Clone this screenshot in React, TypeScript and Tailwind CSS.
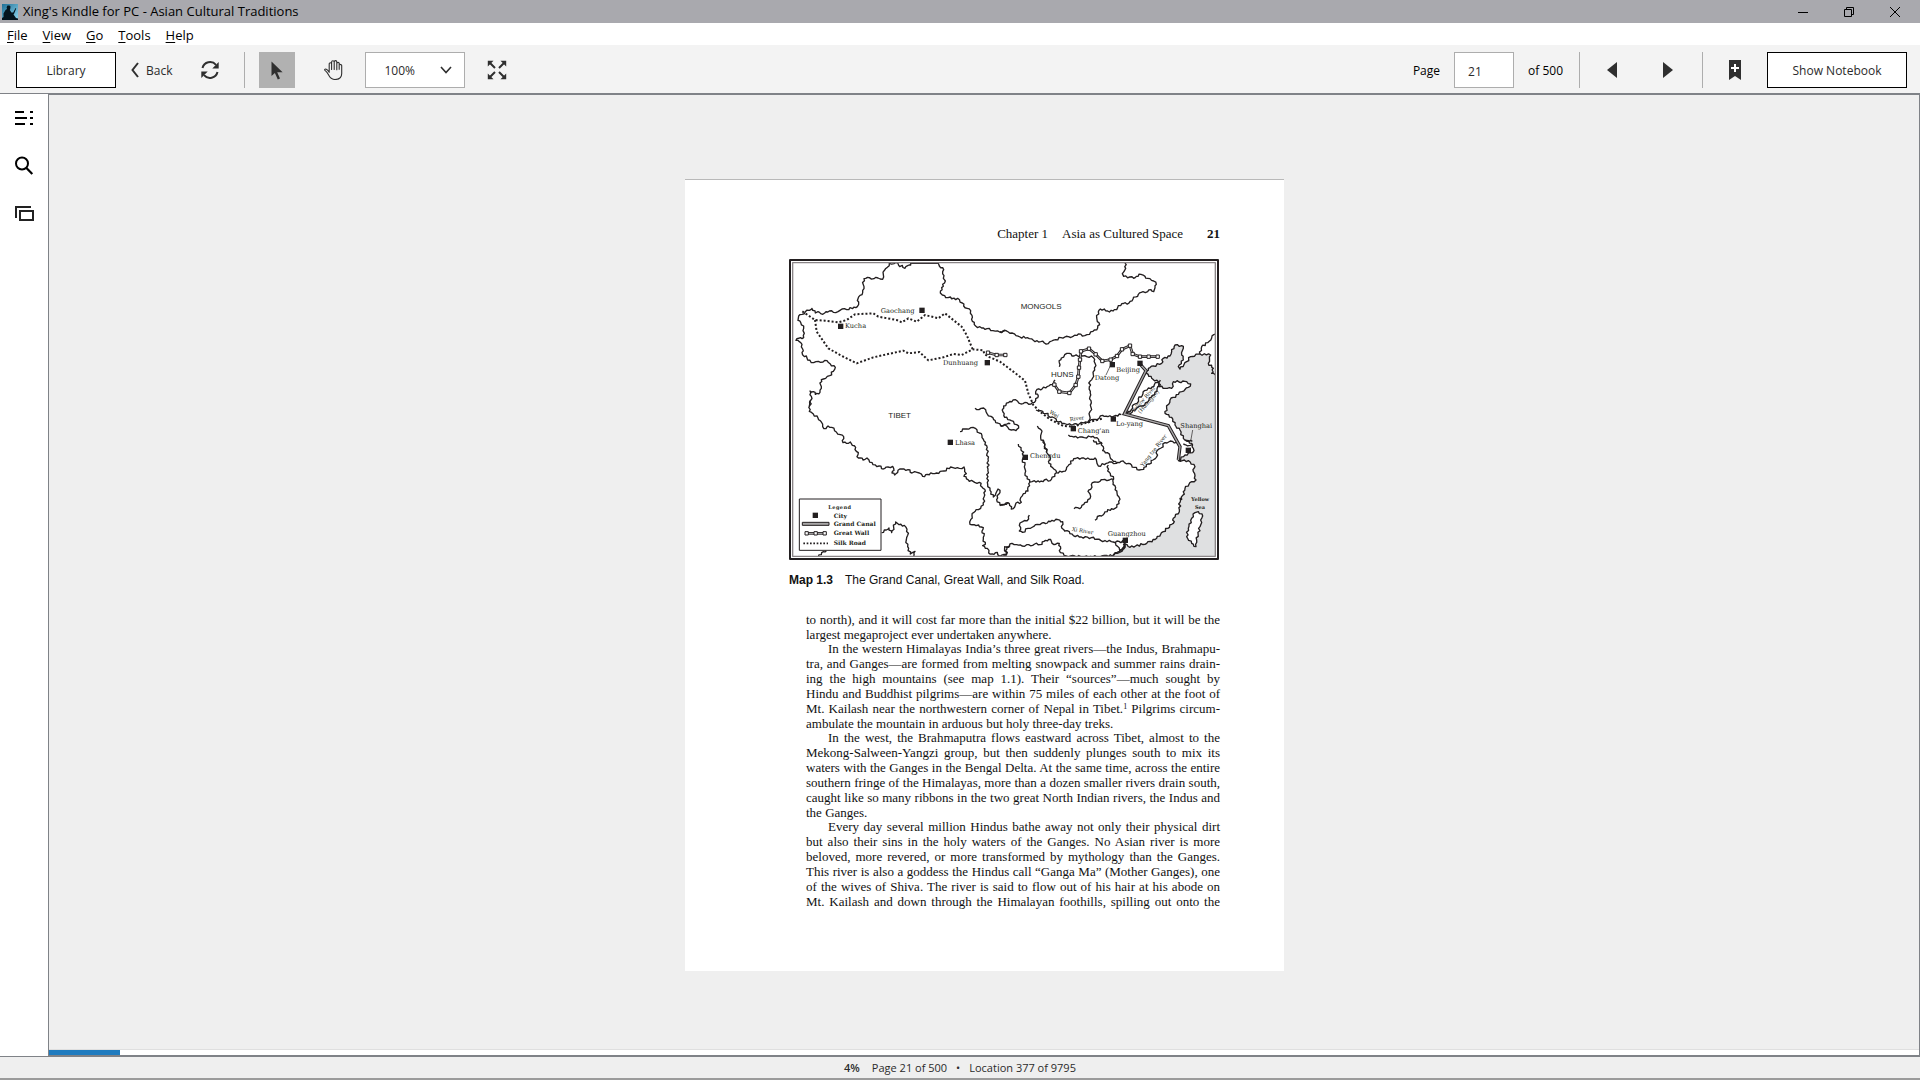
import type { ReactNode } from "react";

const menus = ["File", "View", "Go", "Tools", "Help"];

// Each inner array is one paragraph, each string one set line.
const paragraphs: string[][] = [
  [
    "to north), and it will cost far more than the initial $22 billion, but it will be the",
    "largest megaproject ever undertaken anywhere.",
  ],
  [
    "In the western Himalayas India’s three great rivers—the Indus, Brahmapu-",
    "tra, and Ganges—are formed from melting snowpack and summer rains drain-",
    "ing the high mountains (see map 1.1). Their “sources”—much sought by",
    "Hindu and Buddhist pilgrims—are within 75 miles of each other at the foot of",
    "Mt. Kailash near the northwestern corner of Nepal in Tibet.^1 Pilgrims circum-",
    "ambulate the mountain in arduous but holy three-day treks.",
  ],
  [
    "In the west, the Brahmaputra flows eastward across Tibet, almost to the",
    "Mekong-Salween-Yangzi group, but then suddenly plunges south to mix its",
    "waters with the Ganges in the Bengal Delta. At the same time, across the entire",
    "southern fringe of the Himalayas, more than a dozen smaller rivers drain south,",
    "caught like so many ribbons in the two great North Indian rivers, the Indus and",
    "the Ganges.",
  ],
  [
    "Every day several million Hindus bathe away not only their physical dirt",
    "but also their sins in the holy waters of the Ganges. No Asian river is more",
    "beloved, more revered, or more transformed by mythology than the Ganges.",
    "This river is also a goddess the Hindus call “Ganga Ma” (Mother Ganges), one",
    "of the wives of Shiva. The river is said to flow out of his hair at his abode on",
    "Mt. Kailash and down through the Himalayan foothills, spilling out onto the",
  ],
];

function KindleLogo() {
  return (
    <svg viewBox="0 0 16 16" className="h-4 w-4">
      <defs>
        <linearGradient id="sky" x1="0" y1="0" x2="1" y2="1">
          <stop offset="0" stopColor="#1d6f96" />
          <stop offset="1" stopColor="#8fd6ee" />
        </linearGradient>
      </defs>
      <rect width="16" height="16" fill="url(#sky)" />
      <path d="M0 16v-2l1.5-1V9.5L3.5 6 5 5 4.6 3.2 5.5 1.6l2-.2 1 1.2-.2 2L7.8 6l1.6 2.4 1.8.2L13.6 4l.6.4-2 5.2-.7 1L14 14l2 .6V16z" fill="#04141d" />
    </svg>
  );
}

function RefreshIcon() {
  return (
    <svg viewBox="0 0 20 20" className="h-5 w-5" fill="none" stroke="#2f2f2f" strokeWidth="2">
      <path d="M2.5 8A7.8 7.8 0 0 1 16 4.8" />
      <path d="M17.5 12A7.8 7.8 0 0 1 4 15.2" />
      <path d="M18.7 2v6.4h-6.4zM1.3 18v-6.4h6.4z" fill="#2f2f2f" stroke="none" />
    </svg>
  );
}

function CursorIcon() {
  return (
    <svg viewBox="0 0 12 19" className="h-[19px] w-3">
      <path d="M.5.5v14.6l3.4-3.2 2.9 6.6 2.2-1-2.8-6.3h5.4z" fill="#2f2f2f" />
    </svg>
  );
}

function HandIcon() {
  return (
    <svg viewBox="0 0 20 20" className="h-5 w-5" fill="none" stroke="#2f2f2f" strokeWidth="1.1" strokeLinejoin="round">
      <path d="M6.2 12.3V4a1.2 1.2 0 0 1 2.4 0v5.5V2.1a1.3 1.3 0 0 1 2.6 0v7.4V1.9a1.3 1.3 0 0 1 2.6 0v7.8V3.6a1.2 1.2 0 0 1 2.4 0l1 1.1a1 1 0 0 1 1.5.8v8c0 3.7-2.7 6-6.7 6-3.4 0-4.8-1.7-6.1-4-1-1.8-1.9-3.6-3.4-4.6-1.7-1.1-.4-2.3.9-1.6 1.3.6 2 1.6 2.8 3z" />
      <path d="M16.2 4v5.8" />
    </svg>
  );
}

function ExpandIcon() {
  return (
    <svg viewBox="0 0 20 20" className="h-5 w-5" fill="#2f2f2f" stroke="#2f2f2f" strokeWidth="2">
      <path d="M3 3l5 5M17 3l-5 5M3 17l5-5M17 17l-5-5" />
      <path d="M.8.8h5.7L.8 6.5zM19.2.8v5.7L13.5.8zM.8 19.2v-5.7l5.7 5.7zM19.2 19.2h-5.7l5.7-5.7z" stroke="none" />
    </svg>
  );
}

function BookmarkIcon() {
  return (
    <svg viewBox="0 0 12 20" className="h-5 w-3">
      <path d="M0 0h12v20l-6-4-6 4z" fill="#2f2f2f" />
      <path d="M6 4v8M2 8h8" stroke="#fff" strokeWidth="2" />
    </svg>
  );
}

function Divider() {
  return <span className="h-9 w-px bg-[#adadad]" />;
}

function TitleBar() {
  return (
    <header className="flex h-[23px] shrink-0 items-center bg-[#a9a9ae] pl-[2px] text-black">
      <KindleLogo />
      <h1 className="ml-[5px] text-[13px]">Xing's Kindle for PC - Asian Cultural Traditions</h1>
      <div className="mr-[2px] ml-auto flex">
        <button aria-label="Minimize" className="flex h-5 w-[46px] items-center justify-center">
          <svg viewBox="0 0 10 10" className="h-[10px] w-[10px]" stroke="#000">
            <path d="M0 5.5h10" />
          </svg>
        </button>
        <button aria-label="Restore" className="flex h-5 w-[46px] items-center justify-center">
          <svg viewBox="0 0 10 10" className="h-[10px] w-[10px]" stroke="#000" fill="none">
            <path d="M.5 2.5h7v7h-7zM2.5 2V.5h7v7H8" />
          </svg>
        </button>
        <button aria-label="Close" className="flex h-5 w-[46px] items-center justify-center">
          <svg viewBox="0 0 10 10" className="h-[10px] w-[10px]" stroke="#000">
            <path d="M0 0l10 10M10 0L0 10" />
          </svg>
        </button>
      </div>
    </header>
  );
}

function MenuBar() {
  return (
    <nav className="flex h-[22px] shrink-0 items-center gap-[15px] bg-white pt-[3px] pl-[7px] text-[13px] text-black">
      {menus.map((m) => (
        <button key={m}>
          <span className="underline underline-offset-2">{m[0]}</span>
          {m.slice(1)}
        </button>
      ))}
    </nav>
  );
}

function Toolbar() {
  return (
    <div className="flex h-12 shrink-0 items-center bg-[#f3f3f3] pt-[2px] pr-[13px] pl-4 text-[12px] text-[#2b2b2b]">
      <button className="h-9 w-[100px] border border-black bg-white pt-[2px]">Library</button>
      <button className="ml-[15px] flex items-center gap-[7px] pt-[2px]">
        <svg viewBox="0 0 8 16" className="mb-[2px] h-4 w-2" fill="none" stroke="#2f2f2f" strokeWidth="2">
          <path d="M7 1L1.5 8 7 15" />
        </svg>
        Back
      </button>
      <button aria-label="Sync" className="ml-7">
        <RefreshIcon />
      </button>
      <span className="ml-6 flex">
        <Divider />
      </span>
      <button aria-label="Select" className="ml-[14px] flex h-9 w-9 items-center justify-center bg-[#b1b1b1]">
        <CursorIcon />
      </button>
      <button aria-label="Pan" className="ml-5 flex h-9 w-9 items-center justify-center">
        <HandIcon />
      </button>
      <div className="relative ml-[14px]">
        <select aria-label="Zoom" defaultValue="100%" className="h-9 w-[100px] appearance-none border border-[#adadad] bg-white pt-[2px] pl-[18px]">
          <option>100%</option>
        </select>
        <svg viewBox="0 0 12 8" className="pointer-events-none absolute top-[14px] right-[13px] h-2 w-3" fill="none" stroke="#2f2f2f" strokeWidth="1.6">
          <path d="M1 1l5 5.5L11 1" />
        </svg>
      </div>
      <button aria-label="Full screen" className="ml-[22px]">
        <ExpandIcon />
      </button>

      <div className="ml-auto flex items-center text-black">
        <label htmlFor="page" className="pt-[2px]">Page</label>
        <input id="page" defaultValue="21" className="ml-[14px] h-9 w-[60px] border border-[#adadad] bg-white pt-[2px] pl-[13px] text-[#2b2b2b]" />
        <span className="mr-4 ml-[14px] pt-[2px]">of 500</span>
        <Divider />
        <button aria-label="Previous page" className="ml-[27px]">
          <svg viewBox="0 0 10 16" className="h-4 w-[10px]">
            <path d="M10 0v16L0 8z" fill="#2f2f2f" />
          </svg>
        </button>
        <button aria-label="Next page" className="mr-[29px] ml-[46px]">
          <svg viewBox="0 0 10 16" className="h-4 w-[10px]">
            <path d="M0 0v16l10-8z" fill="#2f2f2f" />
          </svg>
        </button>
        <Divider />
        <button aria-label="Bookmark" className="mr-[26px] ml-[26px]">
          <BookmarkIcon />
        </button>
        <button className="h-9 w-[140px] border border-black bg-white pt-[2px] text-[#2b2b2b]">Show Notebook</button>
      </div>
    </div>
  );
}

function Sidebar() {
  return (
    <aside className="flex w-12 shrink-0 flex-col items-center gap-7 bg-white pt-[14px]">
      <button aria-label="Table of contents">
        <svg viewBox="0 0 20 20" className="h-5 w-5" fill="#000">
          <path d="M1 3h9v2H1zM1 9h12v2H1zM1 15h10v2H1zM16 3h3v2h-3zM16 9h3v2h-3zM16 15h3v2h-3z" />
        </svg>
      </button>
      <button aria-label="Search">
        <svg viewBox="0 0 20 20" className="h-5 w-5" fill="none" stroke="#000" strokeWidth="2">
          <circle cx="8" cy="7.5" r="6" />
          <path d="M12.2 11.7L18.3 18" strokeWidth="2.2" />
        </svg>
      </button>
      <button aria-label="Flashcards">
        <svg viewBox="0 0 20 20" className="h-5 w-5" fill="none" stroke="#222" strokeWidth="2">
          <path d="M6 7h13v9H6zM2 14V3h15" />
        </svg>
      </button>
    </aside>
  );
}

// Walks a path made of M, l, h, v and z and breaks every leg into small
// uneven steps, so that coasts and rivers look surveyed rather than ruled.
const wobble = [2, -3, 1, 3, -2, -1, 3, -3, 2, 0, -2, 3, -1];

function jag(d: string) {
  const tokens = d.match(/[Mlhvz]|-?\d+/g) ?? [];
  const out: string[] = [];
  let cmd = "M";
  let x = 0;
  let y = 0;
  let n = 0;
  let started = false;
  for (let i = 0; i < tokens.length; ) {
    if (/[Mlhvz]/.test(tokens[i])) {
      cmd = tokens[i++];
      if (cmd === "z") out.push("z");
      if (cmd === "M") started = false;
      continue;
    }
    let nx = x;
    let ny = y;
    if (cmd === "M") {
      nx = +tokens[i++];
      ny = +tokens[i++];
    } else if (cmd === "l") {
      nx += +tokens[i++];
      ny += +tokens[i++];
    } else if (cmd === "h") nx += +tokens[i++];
    else ny += +tokens[i++];

    if (!started) {
      out.push(`M${nx} ${ny}`);
      started = true;
    } else {
      const len = Math.hypot(nx - x, ny - y);
      const steps = len > 60 ? 1 : Math.max(1, Math.round(len / 6));
      for (let s = 1; s < steps; s++) {
        const off = wobble[n++ % wobble.length];
        const px = x + ((nx - x) * s) / steps - ((ny - y) / len) * off;
        const py = y + ((ny - y) * s) / steps + ((nx - x) / len) * off;
        out.push(`L${px.toFixed(1)} ${py.toFixed(1)}`);
      }
      out.push(`L${nx} ${ny}`);
    }
    x = nx;
    y = ny;
  }
  return out.join("");
}

function Rough({ d, fill }: { d: string; fill?: string }) {
  return <path d={jag(d)} fill={fill} />;
}

function City({ x, y }: { x: number; y: number }) {
  return <rect x={x - 8} y={y - 8} width="16" height="16" fill="#231f20" stroke="none" />;
}

function Label({ x, y, rotate, children }: { x: number; y: number; rotate?: number; children: ReactNode }) {
  return (
    <text x={x} y={y} transform={rotate ? `rotate(${rotate} ${x} ${y})` : undefined} className="font-['DejaVu_Serif'] text-[20px]" fill="#231f20" stroke="none">
      {children}
    </text>
  );
}

function Region({ x, y, children }: { x: number; y: number; children: ReactNode }) {
  return (
    <text x={x} y={y} className="font-['Liberation_Sans'] text-[24px]" fill="#231f20" stroke="none">
      {children}
    </text>
  );
}

function Wall({ points }: { points: number[][] }) {
  const line = points.map((p) => p.join(",")).join(" ");
  return (
    <g>
      <polyline points={line} strokeWidth="8" stroke="#231f20" />
      <polyline points={line} strokeWidth="2" stroke="#fff" />
      {points.map(([x, y]) => (
        <rect key={`${x}-${y}`} x={x - 5} y={y - 5} width="10" height="10" fill="#fff" stroke="#231f20" strokeWidth="3" />
      ))}
    </g>
  );
}

function SilkRoadMap() {
  return (
    <svg viewBox="0 0 1290 903" className="block w-full" fill="none" stroke="#231f20" strokeWidth="3" strokeLinejoin="round">
      <defs>
        <clipPath id="sheet">
          <path d="M11 11h1268v881H11z" />
        </clipPath>
      </defs>
      <rect x="3" y="3" width="1284" height="897" fill="#fff" strokeWidth="6" />

      <g clipPath="url(#sheet)" strokeWidth="4">
        {/* sea */}
        <Rough
          d="M1290 345 1268 343 1273 328 1258 313 1265 288 1233 285 1205 293 1193 308 1173 330 1168 323 1183 303 1178 288 1183 268 1178 260 1158 258 1148 278 1143 291 1123 298 1118 313 1093 321 1078 328 1073 343 1088 358 1108 368 1113 383 1128 388 1148 388 1153 368 1193 368 1205 375 1198 385 1178 398 1143 423 1133 448 1128 463 1148 475 1158 498 1173 513 1183 538 1208 553 1213 568 1211 581 1188 588 1168 605 1198 605 1218 623 1213 638 1221 663 1208 668 1188 688 1178 721 1173 718 1171 758 1153 778 1153 793 1123 818 1103 838 1073 853 1023 865 1008 855 1001 873 973 888 965 903 1290 903z"
          fill="#dfe0e1"
        />
        <Rough d="M1228 758l13 13-8 32-10 40-2 20-13-10-15-20 5-25 10-30 10-17z" fill="#fff" />

        {/* north-west */}
        <g transform="translate(-27 -27)">
          <Rough d="M328 30v10l-6 12-8 8-4 14-2 14-14-4-12 2-14-3-16 3-2 18 2 12-4 12-8 8-6 10 2 10-4 14-14 6-8-3-10 6-14-2-12 8-14 2-12-4-14 6-12 2-8-6-8 4-10-14-8 6-12 4-10 8-10 5-2 13 8 6 9 11-2 14 4 8-2 13-10 0-13 8 10 4 8 8 2 14-2 10 7 13 6-2 4 12 18 8 14-4 14 2 12-4 10 10 15 10-6 12-11 13-12 8-13 4-2 16 2 10-4 12-14 6-6-8-10-2 4 16-2 12-4 17" />
          <Rough d="M328 40l14 1 12-1 5 10 8-4 8 9 8-8 9-2v-5h83l3 8 10 5v12l4 12-2 8 6 8-8 10 2 6-9 20 6 6 10 8 14-2 16 8 6-4 14 14 4 9 21 14 4 14 1 18 10 14 18 6 16 2 18 6 20 4 15-3" />
        </g>

        {/* north-east */}
        <g transform="translate(633 -27)">
          <Rough d="M0 245l20-2 16 6 12 8 12 4 22 2 18 8 22 4 23 6 10-8 12-4 16-6 22-3 14-1 16-7 12 6 14-4 18-10 14-10 6-10-7-9-2-12 5-18 6-8 22 6 16 0 14-10 12-12 22-2 12-12 16-14 14-8 14 0 10-6 8 6 4-12 4-10-8-10-18-8-8-6-12-6-14 6-8 6-12-4-18-2-4-8 6-8 4-8-2-16" />
          <Rough d="M653 240l-18 24-12 14-18 12-5 22" />
          <Rough d="M178 350v-12l6-14 10-10 14-4 14 8 20-1 18 3 14-2 10 10 1 12-1 20-4 14-2 10-8 10-2 16 3 14-1 16 3 12 0 20-4 26-2 22" />
        </g>

        {/* Tibet and the south-western border */}
        <g transform="translate(-27 423)">
          <Rough d="M92 0l-4 34 12 8 14 12 10 12 4 14 10 6 6-8 11 4 14 14 12 8 10 6-2 18 10 2 12-4 6 10 10 6 2 12 6 4-4 12 10 4 8 6 12-6 6 6 12 14 18 4 13 9 14-6 14-2 4 12-6 8 8 6 10-14 12-4 18 2 12 10 8-4 14 4 10 10 14-6 16-2 12-2 22-6 20-12 14 4 12 0 14-4 2 14 5 6-7 8 12 10 20 8 14 0 8 14 10 12-4 18-2 24-8 10-14 4-6 8-6 10-4 12-2 14 18 4 8-2 8 6 6 2-4 10 6 14-2 10 6 16-8 4 14 8 4 14 16 4 10-6 8 12 12-6 8 0 0-22 10-4" />
          <Rough d="M305 398l14-8 8-6 8 14 6-16 6-16 10 8 16 2 8 12 2 18-4 14 4 20 8 22 6-4 8-4-4 16M115 470l10-12 14-6" />
          <Rough d="M585 25l12 4 6-4 14 4 4 12 12 8 8 10 12 10 10 10 12-6 16-2" />
          <Rough d="M540 95l14-8 18-4 14 2 12 14 8 8 6 16 8 14 4 40 0 30-2 40 8 24 10 20 8-12 6-12 6 4-4 12-6 16 10 16 12-2 12-6" />
        </g>

        {/* central rivers */}
        <g transform="translate(633 213)">
          <Rough d="M0 285l20 3 14 12 14 2 8-8-6-10-16-12-20-10-5-16 2-18 14-10 14-8 14 4 10 8 18-4 12 4 14-10 8-14-8-6 4-14 16-2 14-6 16-6 8-14" />
          <Rough d="M108 240l14 2 8 8 14 0 6 12 14 2 12 12 16 4 10 4 20-2 16 0 18-6 14-4 16-4 12-4 10-8 16 4 18-2 22-4" />
          <Rough d="M375 252l16-8 6-16 14-8 4-14 12-10 6-14 12-8 8 2 10-12 18-14M373 252l24-6 16-14 14-4 20-18 10-14 14-12 2-14 8-6-6-4" />
          <Rough d="M112 288l10 10 2 12-2 14 10 12 2 12 6 18M205 315l16 6 18 0 14 2 26-4 12 4 6 12 10 6" />
          <Rough d="M555 330l12 4 10 0M550 342l20 4 8-2" />
        </g>

        {/* southern rivers and coast */}
        <g transform="translate(633 543)">
          <Rough d="M280 0l10 12 14-4 6 12-2 12 14 6 8 12 10 14 10 4" />
          <Rough d="M130 0l3 20 8 8 2 14 8 12-4 16 10 12 13 15" />
          <Rough d="M55 12l8 18 8 6-4 24 8 14 0 26 14 26 14-4 16 4 14-6 18 2 18-24 16-2 14-8 8-14 14-18 24-2 24 4 16-4 6 16 4 8 24-8 16-4 14 4 14-6 22 6 18 12 14 8 14-2 8-14 10-2 10-12 10-8 2-20 12-8 12-16 22-4 20 6" />
          <Rough d="M90 127l-6 14 0 12-14 8-8 12 2 14-16 2-4 12-10 6-6-16-10-2-18 8M325 75l-2 18 8 8 10 16-2 16 8 10 4 16 6 12 0 20-12 14-14 6-8-2-14 16-10 2-14 14M340 118l-12 2-14-2-14 6-16 2-10 8-2 14-8 6 6 8 0 14-8 10-8 2-10 14-22 4" />
          <Rough d="M88 225l-2 12-18 8-8 4 2 14-4 10 10 4 16-12 14-4 14-8 14-4 16 0 14-8 18-2 14 6-4 14 10 14 14 2 12 12 24 4 30 2 28 8 32 4 40 0" />
          <Rough d="M0 350h18l-4-30 14-2 8-8 14 4 16 4 14-4 18 2 6-4 16 2 12-10 14-6 8 6 8 10 16-4 4 16-4 6 14 14 20 2 30 2h60l18-4 16 2 10-10 16-2 8-14 4-6-4-16M345 305l8 14 6 12 12-4 4-18" />
        </g>
      </g>
      <rect x="11" y="11" width="1268" height="881" stroke="#8a8587" strokeWidth="4" />

      {/* leader lines */}
      <path d="M965 318l-14 30M1211 513l-6 34" strokeWidth="2" />

      {/* Silk Road */}
      <g strokeWidth="6" strokeDasharray="6 6">
        <path d="M40 157l38 26 30 2 40 5 25-7 25-17 55-3 15 10 55 10 15 7 20-12 25 10 25-20 40 10 20-15 50 40 15 25 18 43" />
        <path d="M78 183l5 35 35 50 35 20 50 25 50-18 90-20 15 8 33-4 27 25 45-9 30-10 25 3 33-17 32 3 3 11 12 8 35 15L673 338 708 365 718 403 733 438 753 458 783 481 823 501 853 503 893 491 943 478" />
      </g>

      {/* Grand Canal */}
      <g strokeLinejoin="miter">
        <path d="M1053 315l18 20-65 130 132 35 35 63-5 40" strokeWidth="10" />
        <path d="M1053 315l18 20-65 130 132 35 35 63-5 40" strokeWidth="4" stroke="#a8a6a7" />
      </g>

      <Wall points={[[597, 281], [623, 288], [649, 288]]} />
      <Wall
        points={[
          [796, 377], [811, 398], [841, 402], [860, 378], [868, 353], [870, 326], [873, 302], [876, 277], [900, 269], [920, 286],
          [940, 306], [965, 302], [984, 291], [999, 271], [1023, 260], [1031, 285], [1053, 293], [1079, 293], [1106, 293],
        ]}
      />

      <City x={399} y={154} />
      <City x={155} y={202} />
      <City x={595} y={311} />
      <City x={484} y={550} />
      <City x={970} y={317} />
      <City x={1053} y={313} />
      <City x={973} y={480} />
      <City x={853} y={509} />
      <City x={709} y={595} />
      <City x={1198} y={574} />
      <City x={1009} y={844} />

      <Label x={275} y={161}>Gaochang</Label>
      <Label x={168} y={207}>Kucha</Label>
      <Label x={462} y={317}>Dunhuang</Label>
      <Label x={498} y={558}>Lhasa</Label>
      <Label x={917} y={363}>Datong</Label>
      <Label x={982} y={338}>Beijing</Label>
      <Label x={981} y={501}>Lo-yang</Label>
      <Label x={866} y={521}>Chang'an</Label>
      <Label x={723} y={597}>Chengdu</Label>
      <Label x={1174} y={506}>Shanghai</Label>
      <Label x={956} y={831}>Guangzhou</Label>
      <g className="[&_text]:text-[16px]">
        <Label x={780} y={462} rotate={32}>Wei</Label>
        <Label x={843} y={487} rotate={-8}>River</Label>
        <Label x={1034} y={462} rotate={-48}>Yellow River</Label>
        <Label x={1054} y={464} rotate={-48}>(Huanghe)</Label>
        <Label x={1062} y={624} rotate={-52}>Yang tze River</Label>
        <Label x={848} y={815} rotate={10}>Xi River</Label>
      </g>
      <g className="font-bold [&_text]:text-[15px]">
        <Label x={1207} y={726}>Yellow</Label>
        <Label x={1218} y={749}>Sea</Label>
      </g>
      <Region x={695} y={150}>MONGOLS</Region>
      <Region x={298} y={476}>TIBET</Region>
      <Region x={786} y={353}>HUNS</Region>

      {/* legend */}
      <rect x="31" y="720" width="245" height="154" fill="#fff" />
      <g className="font-bold tracking-widest [&_text]:text-[15px]">
        <Label x={118} y={750}>Legend</Label>
      </g>
      <City x={79} y={769} />
      <rect x="40" y="790" width="80" height="9" fill="#a8a6a7" />
      <Wall points={[[53, 823], [80, 823], [107, 823]]} />
      <path d="M43 853h74" strokeWidth="5" strokeDasharray="5 5" />
      <g className="font-bold [&_text]:text-[18px]">
        <Label x={134} y={776}>City</Label>
        <Label x={134} y={802}>Grand Canal</Label>
        <Label x={134} y={829}>Great Wall</Label>
        <Label x={134} y={859}>Silk Road</Label>
      </g>
    </svg>
  );
}

function Line({ text }: { text: string }) {
  const [before, after] = text.split("^1");
  return (
    <>
      {before}
      {after !== undefined && <sup className="text-[8px]">1</sup>}
      {after}
    </>
  );
}

function BookPage() {
  return (
    <article className="h-[792px] w-[599px] border-t border-[#b9b9b9] bg-white pt-[46px] pr-16 pl-[104px] font-['Liberation_Serif',serif] text-[13px] leading-[15px] text-[#111]">
      <header className="flex justify-end">
        <span>Chapter 1</span>
        <span className="ml-[14px]">Asia as Cultured Space</span>
        <b className="ml-6">21</b>
      </header>
      <figure className="mt-[18px] pr-px">
        <SilkRoadMap />
        <figcaption className="mt-[13px] font-['Liberation_Sans',sans-serif] text-[12px]">
          <b className="mr-3">Map 1.3</b>
          The Grand Canal, Great Wall, and Silk Road.
        </figcaption>
      </figure>
      <div className="mt-6 pl-[17px] whitespace-nowrap">
        {paragraphs.map((lines, i) => (
          <p key={lines[0]} className={i > 0 ? "-mt-px" : ""}>
            {lines.map((line, j) => (
              <span
                key={line}
                className={`block ${i > 0 && j === 0 ? "pl-[22px]" : ""} ${j < lines.length - 1 || i === 3 ? "[text-align-last:justify]" : ""}`}
              >
                <Line text={line} />
              </span>
            ))}
          </p>
        ))}
      </div>
    </article>
  );
}

export default function App() {
  return (
    <div className="flex h-screen flex-col bg-[#efefef] font-['Open_Sans',sans-serif]">
      <TitleBar />
      <MenuBar />
      <Toolbar />
      <div className="flex min-h-0 flex-1 border-t border-[#7f8287]">
        <Sidebar />
        <main className="flex min-w-0 flex-1 flex-col border border-[#7f8287]">
          <div className="flex flex-1 justify-center overflow-hidden pt-[84px] pl-px">
            <BookPage />
          </div>
          <div role="progressbar" aria-label="Reading progress" aria-valuenow={4} className="h-[6px] border-t border-[#dfdfdf] bg-white">
            <div className="h-full w-[71px] bg-[#1f7bbf]" />
          </div>
        </main>
      </div>
      <footer className="flex h-6 shrink-0 items-center justify-center border-t border-b-2 border-t-[#7f8287] border-b-[#9b9b9b] pt-[2px] text-[11px] text-[#2b2b2b]">
        <b className="mr-3 font-semibold">4%</b>
        <span>Page 21 of 500</span>
        <span className="mx-[9px]">•</span>
        <span>Location 377 of 9795</span>
      </footer>
    </div>
  );
}
